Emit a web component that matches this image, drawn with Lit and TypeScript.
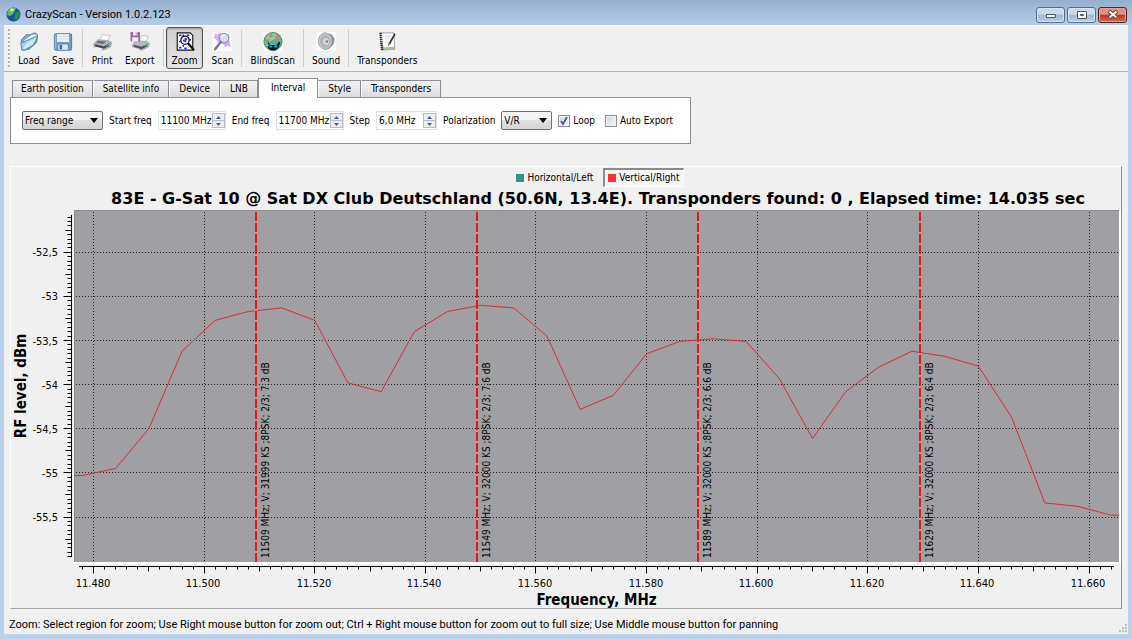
import { LitElement, html, css, svg, nothing } from "lit";
import { customElement, property, state } from "lit/decorators.js";
import { classMap } from "lit/directives/class-map.js";

const range = (from: number, to: number, step: number) =>
  Array.from({ length: Math.floor((to - from) / step + 0.001) + 1 }, (_, i) => from + i * step);

/* ---------- spectrum data ---------- */

const LEVELS = [
  -55.03, -54.95, -54.5, -53.62, -53.27, -53.17, -53.13, -53.27, -53.98, -54.08, -53.4, -53.17,
  -53.1, -53.13, -53.45, -54.28, -54.12, -53.65, -53.51, -53.48, -53.51, -53.93, -54.61, -54.08,
  -53.8, -53.62, -53.68, -53.79, -54.37, -55.34, -55.38, -55.48,
];
const TRACE: [number, number][] = [
  [11476.5, -55.03],
  ...LEVELS.map((db, i) => [11478 + i * 6, db] as [number, number]),
  [11665.4, -55.48],
];
const MARKERS = [
  { mhz: 11509.3, text: "11509 MHz; V; 31999 KS ;8PSK; 2/3; 7.3 dB" },
  { mhz: 11549.4, text: "11549 MHz; V; 32000 KS ;8PSK; 2/3; 7.6 dB" },
  { mhz: 11589.3, text: "11589 MHz; V; 32000 KS ;8PSK; 2/3; 6.6 dB" },
  { mhz: 11629.4, text: "11629 MHz; V; 32000 KS ;8PSK; 2/3; 6.4 dB" },
];

/* ---------- icons ---------- */

const icons: Record<string, unknown> = {
  Load: svg`<path d="M2 9 8 3l3 .5L18 1l3 2-1 9-9 8-8 1z" fill="#7fa9bf" stroke="#4f7d96"/>
    <path d="M5 10 14 3.500l5.500-1-1 8-8 8z" fill="#f4fbff" stroke="#9dbccb" stroke-width=".7"/>
    <path d="M1.500 12.500 7 10.500 19.500 5l1.500 1-4.500 9L6 21.300l-3.500-.8z" fill="#a9d0e2" stroke="#4d7a92"/>
    <path d="M5 17.500 8 13l11-6-3.500 7L6 19.500z" fill="#d7edf6" opacity=".8"/>`,
  Save: svg`<rect x="1" y="2" width="20" height="19" rx="1.5" fill="#6f9fc6" stroke="#3f6f9b"/>
    <path d="M4 2.500h14v9H4z" fill="#eef5fa"/><path d="M4 5h14M4 8h14" stroke="#c3d6e3"/>
    <path d="M5 14h12v7H5z" fill="#dfe8ee" stroke="#4b7292" stroke-width=".7"/><path d="M7 15h3v5H7z" fill="#44698c"/>
    <path d="M2 3v17" stroke="#a9cbe4"/>`,
  Print: svg`<path d="M8 10 11 3l9.500 1-4 8z" fill="#fafafa" stroke="#aaa" stroke-width=".7"/>
    <path d="M1 14 6 9l12 1 4 2-1 5-8 4-11-3z" fill="#b4b8bc" stroke="#888" stroke-width=".7"/>
    <path d="M3 14l10 2.500 7-4-1 4-6 3-10-2.500z" fill="#4a4e54"/><path d="M7 10l9 1-4 3-8-1.500z" fill="#6a6e74"/>
    <path d="M3 17l9 2-3 2-7-2z" fill="#eef2f3"/><path d="M16 15l4-2v1.500l-4 2z" fill="#52c4cf"/>`,
  Export: svg`<path d="M10 11 12.500 4l8.500 1-4 8z" fill="#fafafa" stroke="#aaa" stroke-width=".7"/>
    <path d="M2 15 7 10l11 1 4 2-1 4-8 4-10-3z" fill="#b4b8bc" stroke="#888" stroke-width=".7"/>
    <path d="M4 15l9 2 7-4-1 3.500-6 3.500-9-3z" fill="#4a4e54"/><path d="M3 18l8 2-2 1.500-6-2z" fill="#eef2f3"/><path d="M16 15l4-2v1.500l-4 2z" fill="#52c4cf"/>
    <path d="M0 0h10l1 1v10H1l-1-1z" fill="#9a63b3"/><path d="M3 0h5v4H3zM2 6h7v5H2z" fill="#f6eefa"/><path d="M6 1h1v2H6z" fill="#8d51a8"/>`,
  Zoom: svg`<path d="M2 1h15l3 3v17H2z" fill="#fff" stroke="#111" stroke-width="1.300"/>
    <path d="M4 3h3v2H4zM8 3h2v2H8zM13 3h3v2h-3zM4 10h2v2H4zM4 17h3v2H4zM8 15h2v2H8zM10 18h3v2h-3zM16 8h2v2h-2z" fill="#2a33dd"/>
    <circle cx="11" cy="9.500" r="4.800" fill="#fff" stroke="#111" stroke-width="1.500"/>
    <path d="M8.500 9h2V7h3v2h-1v3h-2v-1h-2z" fill="#2a33dd"/><path d="m14.500 13 7 8" stroke="#111" stroke-width="2.600"/>`,
  Scan: svg`<rect width="22" height="22" fill="#fff"/><path d="M3 2l3 1 3-3 1 4 4-1 6 8 1 6-4-1-2 2-3-4-6-2-2-4-3-1z" fill="#c79df0" opacity=".8"/>
    <circle cx="13.500" cy="7" r="5.500" fill="#d9dcf5" stroke="#8e8ea6" stroke-width="1.500"/><path d="M10.500 6a3.500 3.500 0 0 1 4-2.500" fill="none" stroke="#fff" stroke-width="1.500"/>
    <path d="M9.500 11.500 3 20" stroke="#777b88" stroke-width="2.800" stroke-linecap="round"/>`,
  BlindScan: svg`<rect width="22" height="22" fill="#fff"/><circle cx="11" cy="11" r="10.500" fill="#5fae8c" stroke="#3b8568"/>
    <path d="M2 8c2-5 7-7 12-6l5 5-6 1-5 3z" fill="#8ccbb4"/><path d="M6 4l4-1 1 2-4 2zM13 5l4-1 1 3-4 1zM4 8l3 0-1 2H3zM14 2l3 1-2 1z" fill="#db7a4c"/>
    <path d="M5 11.500 8 15h7l3-3.500 1.500.5-2 6-3.500 3H8l-3-3z" fill="#08151b"/><path d="m7 15.500 3 .5v2H7zm5 .5 4-1v3h-4z" fill="#28a3dc"/><path d="M1 12l5 3M2 16l5-1" stroke="#9bd4a8"/>`,
  Sound: svg`<rect width="22" height="22" fill="#fff"/><path d="M10 1l8 2 3 5-1 6-5 5-6 2z" fill="#8f9295"/>
    <ellipse cx="10" cy="10.500" rx="8" ry="9.500" fill="#c4c6c8" stroke="#a0a3a6"/><ellipse cx="10" cy="10.500" rx="6" ry="7.500" fill="#b0b4b7"/>
    <ellipse cx="11" cy="11" rx="3.500" ry="4" fill="#d5d7d9"/><circle cx="12" cy="11" r="1.500" fill="#7d8183"/>`,
  Transponders: svg`<path d="M3 1h16l1 19-15 1z" fill="#f7fafb" stroke="#8f989e"/>
    <path d="M5 21l15-1-1-3-13 1z" fill="#a5c38a"/><path d="M3.500 1l2 20" stroke="#222" stroke-width="3" stroke-dasharray="1.300 1"/>
    <path d="M9 5h7M9 8h5M9 11h3" stroke="#cdd6dc"/><path d="m19.500 1.500-7 12-.5 3 2.500-2 6.500-12z" fill="#3d3029"/><path d="m13 12-1 4 2.500-2z" fill="#e8a83c"/>`,
};

/* ---------- spectrum plot ---------- */

@customElement("spectrum-plot")
export class SpectrumPlot extends LitElement {
  @state() private w = 1110;
  @state() private h = 398;
  private observer = new ResizeObserver(([entry]) => {
    this.w = Math.round(entry.contentRect.width);
    this.h = Math.round(entry.contentRect.height);
  });

  connectedCallback() {
    super.connectedCallback();
    this.observer.observe(this);
  }
  disconnectedCallback() {
    this.observer.disconnect();
    super.disconnectedCallback();
  }

  static styles = css`
    :host { display: block; overflow: hidden; font-family: "DejaVu Sans Condensed", "DejaVu Sans", sans-serif; }
    svg { display: block; }
    .area { fill: #a0a0a4; }
    .dark { stroke: #8a8a8a; fill: none; }
    .light { stroke: #fff; stroke-width: 2; fill: none; }
    .grid { stroke: #222; stroke-dasharray: 1 2; }
    .axis { stroke: #000; fill: none; }
    .trace { stroke: #cf3338; fill: none; stroke-width: 1; }
    .glow { stroke: #dc8f86; stroke-width: 2; }
    .marker { stroke: #dd1a22; stroke-width: 2; stroke-dasharray: 9 2; }
    .tick { font-size: 11px; }
    .label { font-size: 10px; }
    .title { font-size: 15px; font-weight: bold; }
  `;

  render() {
    const L = 63, R = this.w - 2, T = 0, B = this.h - 46;
    const fx = (mhz: number) => L + ((mhz - 11476.47) / 188.95) * (R - L);
    const fy = (db: number) => T + ((-52.02 - db) / 3.99) * (B - T);
    const snap = (v: number) => Math.floor(v) + 0.5;
    const xMinor = range(11478, 11664, 2);
    const yMinor = range(0, 77, 1).map((i) => -52.1 - i * 0.05);
    const xMajor = range(11480, 11660, 20);
    const yMajor = range(0, 6, 1).map((i) => -52.5 - i * 0.5);
    const xTick = (f: number) => (f % 20 === 0 ? 7 : f % 10 === 0 ? 5 : 3);
    const yTick = (v: number) => {
      const n = Math.round(-v * 100);
      return n % 50 === 0 ? 8 : n % 25 === 0 ? 6 : 4;
    };
    const ax = L - 2.5, ay = B + 4.5;
    return html`<svg width=${this.w} height=${this.h} role="img" aria-label="RF level by frequency">
      <rect class="area" x=${L} y=${T} width=${R - L} height=${B - T}></rect>
      ${xMajor.map((f) => svg`<path class="grid" d="M${snap(fx(f))} ${T + 2}V${B}"/>`)}
      ${yMajor.map((v) => svg`<path class="grid" d="M${L + 2} ${snap(fy(v))}H${R}"/>`)}
      <path class="dark" d="M${L + 0.5} ${B}V${T + 0.5}H${R}"></path>
      <path class="light" d="M${L} ${B + 1}H${R + 1}V${T}"></path>
      <polyline class="trace" points=${TRACE.map(([f, v]) => `${fx(f).toFixed(1)},${fy(v).toFixed(1)}`).join(" ")}></polyline>
      ${MARKERS.map((m) => {
        const x = Math.round(fx(m.mhz));
        return svg`<path class="glow" d="M${x} ${T + 2}V${B}"/><path class="marker" d="M${x} ${T + 2}V${B}"/>
          <text class="label" transform="translate(${x + 13} ${B - 4}) rotate(-90)">${m.text}</text>`;
      })}
      <path class="axis" d="M${ax} ${T + 5}V${B - 5}${yMinor.map((v) => `M${ax} ${snap(fy(v))}h${-yTick(v)}`).join("")}"></path>
      <path class="axis" d="M${L + 5} ${ay}H${R - 5}${xMinor.map((f) => `M${snap(fx(f))} ${ay}v${xTick(f)}`).join("")}"></path>
      ${yMajor.map((v) => svg`<text class="tick" text-anchor="end" x=${L - 16} y=${Math.round(fy(v)) + 4}>${String(v).replace(".", ",")}</text>`)}
      ${xMajor.map((f) => svg`<text class="tick" text-anchor="middle" x=${Math.round(fx(f)) - 1} y=${B + 25}>${(f / 1000).toFixed(3)}</text>`)}
      <text class="title" text-anchor="middle" x=${(L + R) / 2} y=${B + 43}>Frequency, MHz</text>
      <text class="title" text-anchor="middle" transform="translate(15 ${(T + B) / 2}) rotate(-90)">RF level, dBm</text>
    </svg>`;
  }
}

/* ---------- numeric field with arrows ---------- */

@customElement("spin-field")
export class SpinField extends LitElement {
  @property() label = "";
  @property() value = "";
  @property({ type: Boolean }) short = false;

  static styles = css`
    :host { display: flex; align-items: center; }
    label { margin-right: 6px; white-space: nowrap; }
    .box { display: flex; align-items: center; width: 66px; height: 17px; border: 1px solid #dde1e8; background: #fff; }
    .short { width: 59px; }
    input { flex: 1; min-width: 0; border: 0; padding: 0 0 0 2px; background: none; font: inherit; color: #000; outline: 0; }
    .arrows { display: flex; flex-direction: column; width: 13px; height: 15px; }
    button { flex: 1; display: flex; align-items: center; justify-content: center; min-height: 0; padding: 0; border: 1px solid #b7bcc4; background: #eceef2; }
    button + button { border-top: 0; }
    svg { display: block; }
  `;

  private step(by: number) {
    const [num, unit] = this.value.split(" ");
    const n = parseFloat(num.replace(",", ".")) + by;
    this.value = `${num.includes(",") ? n.toFixed(1).replace(".", ",") : n} ${unit}`;
  }

  render() {
    return html`<label for="field">${this.label}</label>
      <div class="box ${this.short ? "short" : ""}">
        <input id="field" .value=${this.value} />
        <span class="arrows">
          <button aria-label="Increase" @click=${() => this.step(1)}><svg width="5" height="3"><path d="M0 3 2.500 0 5 3z" fill="#4b5f9e"/></svg></button>
          <button aria-label="Decrease" @click=${() => this.step(-1)}><svg width="5" height="3"><path d="M0 0h5L2.500 3z" fill="#4b5f9e"/></svg></button>
        </span>
      </div>`;
  }
}

/* ---------- window ---------- */

@customElement("app-root")
export class AppRoot extends LitElement {
  @state() private tab = "Interval";
  @state() private tool = "Zoom";

  static styles = css`
    :host {
      display: block;
      font: 10px/14px "DejaVu Sans Condensed", "DejaVu Sans", sans-serif;
      color: #000;
    }
    button, select, input { font: inherit; color: inherit; }
    .window { display: flex; flex-direction: column; box-sizing: border-box; min-height: 100vh; padding: 0 4px 5px; background: #b9d1ea; }
    .titlebar { display: flex; align-items: center; gap: 4px; height: 25px; margin: 0 -4px; padding: 0 5px 0 6px; box-sizing: border-box;
      background: linear-gradient(#94afce, #b6cde8); font: 11px/16px Roboto, "Open Sans", sans-serif; }
    .caption { flex: 1; padding-top: 4px; }
    .globe { padding-top: 4px; }
    .controls { display: flex; gap: 2px; padding-top: 4px; }
    .control { display: flex; align-items: center; justify-content: center; width: 29px; height: 16px; padding: 0; border: 1px solid #526f92; border-radius: 3px;
      background: linear-gradient(#c8d9ec 45%, #9fb9d6 50%, #b8cfe6); box-shadow: inset 0 0 0 1px #d6e4f2; }
    .close { border-color: #5a2320; background: linear-gradient(#dc9384 45%, #b83a28 50%, #d06a50); box-shadow: inset 0 0 0 1px #e2a496; }
    .client { flex: 1; display: flex; flex-direction: column; background: #f0f0f0; }
    .toolbar { display: flex; align-items: center; height: 46px; padding: 0 4px; border-bottom: 1px solid #b4b4b4; box-shadow: inset 0 1px #fafafa; }
    .handle { width: 2px; height: 38px; margin-right: 2px; background: repeating-linear-gradient(#b5b5b5 0 2px, transparent 2px 4px); }
    .tool { display: flex; flex-direction: column; align-items: center; gap: 3px; height: 42px; padding: 4px 5px 0; box-sizing: border-box; border: 1px solid transparent; border-radius: 3px; background: none; }
    .tool.on { margin-right: 2px; border-color: #555; background: linear-gradient(#cfcfcf, #e6e6e6); box-shadow: inset 0 1px 2px #999; }
    .tool svg { display: block; }
    .sep { width: 1px; height: 38px; margin: 0 2px; background: #cfcfcf; }
    .tabs { display: flex; align-items: flex-end; height: 19px; padding: 0 0 0 8px; margin-top: 6px; }
    .tab { height: 17px; padding: 0 9px; border: 1px solid #8b8e94; border-bottom: 0; border-left-color: #fafafa; background: linear-gradient(#f3f3f3, #dcdcdc); line-height: 16px; white-space: nowrap; }
    .tab:first-child { border-left-color: #8b8e94; padding: 0 8px; }
    .tab.on { height: 20px; padding: 0 12px 2px; margin-bottom: -1px; border-left-color: #8b8e94; background: #fff; z-index: 1; }
    .options { display: flex; align-items: center; align-self: flex-start; gap: 6px; margin: 0 6px; height: 45px; padding: 0 17px 0 11px; border: 1px solid #8b8e94; background: #fff; }
    .combo { display: grid; align-items: center; }
    .combo > * { grid-area: 1 / 1; }
    .combo svg { justify-self: end; margin-right: 5px; pointer-events: none; }
    select { appearance: none; width: 81px; height: 19px; padding: 0 2px; border: 1px solid #707070; border-radius: 2px; background: linear-gradient(#f4f4f4 45%, #e0e0e0 50%, #d4d4d4); }
    .narrow { width: 51px; }
    .check { display: flex; align-items: center; gap: 3px; margin-right: 4px; white-space: nowrap; }
    .check:last-child { margin-right: 0; }
    .check span { display: grid; }
    .check span > * { grid-area: 1 / 1; }
    .check input { appearance: none; box-sizing: border-box; width: 12px; height: 12px; margin: 0; border: 1px solid #8e8f8f; background: linear-gradient(135deg, #d2d5da, #f6f6f6); box-shadow: inset 0 0 0 1px #f4f4f4; }
    .check svg { pointer-events: none; display: none; }
    .check input:checked + svg { display: block; }
    .chart { flex: 1; display: flex; flex-direction: column; margin: 22px 6px 0; border: 1px solid; border-color: #fff #8f8f8f #a5a5a5 #fff; }
    .legend { display: flex; justify-content: center; gap: 6px; height: 20px; padding-left: 64px; }
    .key { display: flex; align-items: center; gap: 3px; height: 19px; padding: 0 3px; border: 1px solid transparent; background: none; margin-top: 1px; }
    .key.on { border: 1px solid; border-color: #8a8a8a #fff #fff #8a8a8a; border-left-width: 2px; border-top-width: 2px; background: #f5f5f5; }
    .swatch { width: 8px; height: 8px; background: #34918c; }
    .red { background: #fa3232; }
    h1 { margin: 0; padding-left: 64px; text-align: center; font-family: "DejaVu Sans", sans-serif; font-size: 16px; line-height: 23px; white-space: nowrap; }
    spectrum-plot { flex: 1 1 0; min-height: 300px; }
    .status { display: flex; align-items: flex-end; justify-content: space-between; height: 25px; padding: 0 1px 0 5px; font: 11px/20px Roboto, "Open Sans", sans-serif; }
    .status svg { margin-bottom: 2px; }
    .status p { margin: 0; align-self: center; padding-top: 6px; white-space: nowrap; }
  `;

  private toolButton(name: string) {
    return html`<button class=${classMap({ tool: true, on: this.tool === name })} @click=${() => (this.tool = name)}>
      <svg width="22" height="22" viewBox="0 0 22 22" fill="none">${icons[name]}</svg>${name}
    </button>`;
  }

  private combo(label: string, options: string[], narrow = false) {
    return html`<span class="combo">
      <select class=${narrow ? "narrow" : nothing} id=${label} aria-label=${label}>${options.map((o) => html`<option>${o}</option>`)}</select>
      <svg width="8" height="5"><path d="M0 0h8L4 5z"/></svg>
    </span>`;
  }

  private check(label: string, on: boolean) {
    return html`<label class="check"><span><input type="checkbox" ?checked=${on} />
      <svg width="12" height="12"><path d="m3 6 2 3 4-7" fill="none" stroke="#3c5f9c" stroke-width="1.800"/></svg></span>${label}</label>`;
  }

  render() {
    const groups = [["Load", "Save"], ["Print", "Export"], ["Zoom", "Scan"], ["BlindScan"], ["Sound"], ["Transponders"]];
    const tabs = ["Earth position", "Satellite info", "Device", "LNB", "Interval", "Style", "Transponders"];
    const sep = html`<span class="sep"></span>`;
    return html`<div class="window">
      <header class="titlebar">
        <svg class="globe" width="15" height="15" viewBox="0 0 15 15">
          <circle cx="7.500" cy="7.500" r="7" fill="#1c4f94"/><path d="M2 3c3-3 6-3 8-2L9 4 7 7 4 9 1 8z" fill="#61b95e"/>
          <path d="M9 6l4-2 1 4-3 5-3-1z" fill="#2f8a4b"/><path d="M4 2c2-1 4 0 4 1L5 5z" fill="#d3efd0"/>
        </svg>
        <span class="caption">CrazyScan - Version 1.0.2.123</span>
        <div class="controls">
          <button class="control" aria-label="Minimize"><svg width="12" height="8"><path d="M1.500 3.500h9v3h-9z" fill="#fff" stroke="#4a5868"/></svg></button>
          <button class="control" aria-label="Maximize"><svg width="12" height="8"><path d="M1.500.5h9v7h-9z" fill="#fff" stroke="#4a5868"/><path d="M4.500 3.500h3v1h-3z" fill="none" stroke="#4a5868"/></svg></button>
          <button class="control close" aria-label="Close"><svg width="12" height="9"><path d="m2 1 8 7M10 1 2 8" stroke="#5d3734" stroke-width="3.800"/><path d="m2.500 1.500 7 6M9.500 1.500l-7 6" stroke="#fff" stroke-width="2"/></svg></button>
        </div>
      </header>
      <main class="client">
        <nav class="toolbar"><span class="handle"></span>
          ${groups.map((g, i) => html`${i ? sep : nothing}${g.map((n) => this.toolButton(n))}`)}
        </nav>
        <div class="tabs" role="tablist">
          ${tabs.map((t) => html`<button role="tab" class=${classMap({ tab: true, on: t === this.tab })} aria-selected=${t === this.tab} @click=${() => (this.tab = t)}>${t}</button>`)}
        </div>
        <section class="options">
          ${this.combo("Range mode", ["Freq range"])}
          <spin-field label="Start freq" value="11100 MHz"></spin-field>
          <spin-field label="End freq" value="11700 MHz"></spin-field>
          <spin-field label="Step" value="6,0 MHz" short></spin-field>
          <label for="Polarization">Polarization</label>
          ${this.combo("Polarization", ["V/R"], true)}
          ${this.check("Loop", true)}${this.check("Auto Export", false)}
        </section>
        <section class="chart">
          <div class="legend">
            <button class="key"><span class="swatch"></span>Horizontal/Left</button>
            <button class="key on"><span class="swatch red"></span>Vertical/Right</button>
          </div>
          <h1>83E - G-Sat 10 @ Sat DX Club Deutschland (50.6N, 13.4E). Transponders found: 0 , Elapsed time: 14.035 sec</h1>
          <spectrum-plot></spectrum-plot>
        </section>
        <footer class="status">
          <p>Zoom: Select region for zoom; Use Right mouse button for zoom out; Ctrl + Right mouse button for zoom out to full size; Use Middle mouse button for panning</p>
          <svg width="8" height="8"><path d="M6 0h2v2H6zM3 3h2v2H3zM6 3h2v2H6zM0 6h2v2H0zM3 6h2v2H3zM6 6h2v2H6z" fill="#c0c0c0"/></svg>
        </footer>
      </main>
    </div>`;
  }
}
